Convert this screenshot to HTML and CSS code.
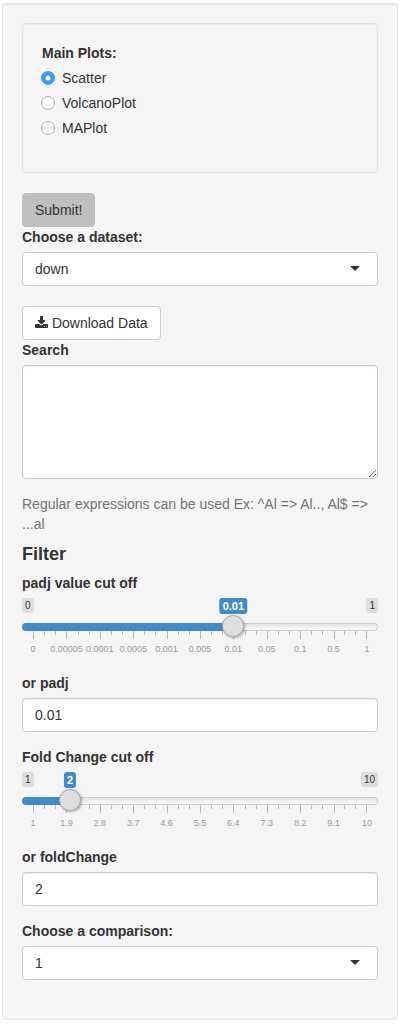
FILE: index.html
```
<!DOCTYPE html>
<html lang="en">
  <head>
    <meta charset="UTF-8" />
    <meta name="viewport" content="width=device-width, initial-scale=1.0" />
    <title>Main Plots</title>
    <link rel="stylesheet" href="styles.css">
  </head>
  <body>
    <form class="well">
      <fieldset class="well plots">
        <legend class="label">Main Plots:</legend>
        <label class="radio"><input type="radio" name="plot" value="scatter" checked /> Scatter</label>
        <label class="radio"><input type="radio" name="plot" value="volcano" /> VolcanoPlot</label>
        <label class="radio"><input type="radio" name="plot" value="ma" /> MAPlot</label>
      </fieldset>

      <button type="button" class="btn btn-submit">Submit!</button>

      <div class="form-group dataset">
        <label class="label" for="dataset">Choose a dataset:</label>
        <select class="control" id="dataset">
          <option>up</option>
          <option selected>down</option>
        </select>
      </div>

      <button type="button" class="btn">
        <svg class="icon" viewBox="0 0 1664 1536" aria-hidden="true">
          <path d="M1280 1216q0-26-19-45t-45-19-45 19-19 45 19 45 45 19 45-19 19-45zm256 0q0-26-19-45t-45-19-45 19-19 45 19 45 45 19 45-19 19-45zm128-224v320q0 40-28 68t-68 28H96q-40 0-68-28t-28-68V992q0-40 28-68t68-28h465l135 136q58 56 136 56t136-56l136-136h464q40 0 68 28t28 68zm-325-569q17 41-14 70l-448 448q-18 19-45 19t-45-19L339 493q-31-29-14-70 17-39 59-39h256V-64q0-26 19-45t45-19h256q26 0 45 19t19 45v448h256q42 0 59 39z" transform="translate(0 128)" />
        </svg>
        Download Data
      </button>

      <div class="form-group">
        <label class="label" for="search">Search</label>
        <textarea class="control" id="search"></textarea>
      </div>

      <p class="help">Regular expressions can be used Ex: ^Al =&gt; Al.., Al$ =&gt; ...al</p>

      <h4>Filter</h4>

      <div class="form-group">
        <label class="label" for="padjSlider">padj value cut off</label>
        <div class="slider" style="--pos: 0.6">
          <div class="tags">
            <span class="tag">0</span>
            <span class="tag">1</span>
            <output class="tag tag-value" for="padjSlider">0.01</output>
          </div>
          <input type="range" id="padjSlider" min="0" max="10" value="6" />
          <ul class="ticks">
            <li></li><li></li><li></li><li></li><li></li><li></li><li></li><li></li><li></li><li></li>
          </ul>
          <ul class="scale">
            <li>0</li>
            <li>0.00005</li>
            <li>0.0001</li>
            <li>0.0005</li>
            <li>0.001</li>
            <li>0.005</li>
            <li>0.01</li>
            <li>0.05</li>
            <li>0.1</li>
            <li>0.5</li>
            <li>1</li>
          </ul>
        </div>
      </div>

      <div class="form-group">
        <label class="label" for="padj">or padj</label>
        <input class="control" type="text" id="padj" value="0.01" />
      </div>

      <div class="form-group">
        <label class="label" for="foldSlider">Fold Change cut off</label>
        <div class="slider" style="--pos: 0.1111">
          <div class="tags">
            <span class="tag">1</span>
            <span class="tag">10</span>
            <output class="tag tag-value" for="foldSlider">2</output>
          </div>
          <input type="range" id="foldSlider" min="1" max="10" value="2" />
          <ul class="ticks">
            <li></li><li></li><li></li><li></li><li></li><li></li><li></li><li></li><li></li><li></li>
          </ul>
          <ul class="scale">
            <li>1</li>
            <li>1.9</li>
            <li>2.8</li>
            <li>3.7</li>
            <li>4.6</li>
            <li>5.5</li>
            <li>6.4</li>
            <li>7.3</li>
            <li>8.2</li>
            <li>9.1</li>
            <li>10</li>
          </ul>
        </div>
      </div>

      <div class="form-group">
        <label class="label" for="foldChange">or foldChange</label>
        <input class="control" type="text" id="foldChange" value="2" />
      </div>

      <div class="form-group comparison">
        <label class="label" for="comparison">Choose a comparison:</label>
        <select class="control" id="comparison">
          <option>1</option>
        </select>
      </div>
    </form>
  </body>
</html>
```
FILE: styles.css
```
* {
  box-sizing: border-box;
}

body {
  font-family: "Helvetica Neue", "Liberation Sans", Arial, sans-serif;
  font-size: 14px;
  line-height: 20px;
  color: #333;
  background-color: #fff;
  margin: 3px 2px;
}

button,
input,
select,
textarea {
  font: inherit;
  color: inherit;
}

ul {
  list-style: none;
  margin: 0;
  padding: 0;
}

.well {
  min-width: 0;
  margin: 0;
  padding: 19px;
  background-color: #f5f5f5;
  border: 1px solid #e3e3e3;
  border-radius: 4px;
  box-shadow: inset 0 1px 1px rgba(0, 0, 0, 0.05);
}

.plots {
  display: flex;
  flex-direction: column;
  gap: 5px;
  margin-bottom: 20px;
  padding-bottom: 34px;
}

.label {
  display: block;
  padding: 0;
  margin-bottom: 5px;
  font-weight: bold;
}

.plots .label {
  float: left;
  margin-bottom: 0;
}

.radio {
  display: flex;
  align-items: center;
  gap: 7px;
  margin-left: -1px;
}

.radio input {
  appearance: none;
  width: 14px;
  height: 14px;
  margin: 0;
  background-color: #fff;
  border: 1px solid #aaa;
  border-radius: 50%;
}

.radio input:checked {
  background: radial-gradient(circle, #fff 2px, #3b99fc 3px);
  border-color: #3b99fc;
}

.btn {
  display: block;
  height: 34px;
  padding: 6px 12px;
  line-height: 20px;
  background-color: #fff;
  border: 1px solid #ccc;
  border-radius: 4px;
  cursor: pointer;
}

.btn-submit {
  background-color: #bfbfbf;
  border-color: #bfbfbf;
}

.icon {
  width: 13px;
  height: 12px;
  fill: #333;
}

.form-group {
  margin-bottom: 15px;
}

.dataset,
.comparison {
  margin-bottom: 20px;
}

.control {
  display: block;
  width: 100%;
  height: 34px;
  padding: 6px 12px;
  background-color: #fff;
  border: 1px solid #ccc;
  border-radius: 4px;
  box-shadow: inset 0 1px 1px rgba(0, 0, 0, 0.075);
}

textarea.control {
  height: 114px;
  resize: both;
}

select.control {
  appearance: none;
  background-image: url("data:image/svg+xml,%3Csvg xmlns='http://www.w3.org/2000/svg' width='10' height='5'%3E%3Cpath d='M0 0h10L5 5z' fill='%23333'/%3E%3C/svg%3E");
  background-repeat: no-repeat;
  background-position: right 17px top 13px;
  box-shadow: none;
}

.help {
  margin: 0 0 10px;
  color: #737373;
}

h4 {
  margin: 0 0 9px;
  font-size: 18px;
  line-height: 20px;
  font-weight: bold;
}

.slider {
  height: 60px;
}

.tags {
  position: relative;
  display: flex;
  justify-content: space-between;
  height: 18px;
}

.tag {
  height: 15px;
  padding: 1px 3px;
  font-size: 10px;
  line-height: 13px;
  background-color: #ddd;
  border-radius: 3px;
}

.tag-value {
  position: absolute;
  left: calc(11px + (100% - 22px) * var(--pos));
  transform: translateX(-50%);
  height: 16px;
  font-size: 11px;
  line-height: 14px;
  font-weight: bold;
  color: #fff;
  background-color: #428bca;
}

.slider input {
  appearance: none;
  position: relative;
  z-index: 1;
  display: block;
  width: 100%;
  height: 22px;
  margin: 0;
  background: none;
}

.slider input::-webkit-slider-runnable-track {
  height: 8px;
  border-radius: 8px;
  background:
    linear-gradient(#428bca, #428bca) 0 0 / calc(11px + (100% - 22px) * var(--pos)) 100% no-repeat,
    linear-gradient(#ccc, #ccc) 0 0 / 100% 1px no-repeat,
    linear-gradient(#ccc, #ccc) 0 100% / 100% 1px no-repeat,
    radial-gradient(circle at 0 50%, transparent 3px, #ccc 3px) 100% 0 / 4px 100% no-repeat,
    linear-gradient(#dedede, #fff);
}

.slider input::-webkit-slider-thumb {
  appearance: none;
  width: 22px;
  height: 22px;
  margin-top: -8px;
  background-color: #dedede;
  border: 1px solid #aaa;
  border-radius: 50%;
  box-shadow: 1px 1px 3px rgba(0, 0, 0, 0.3);
}

.ticks {
  display: grid;
  grid-template-columns: repeat(10, 1fr);
  margin: -7px 11px 0;
}

.ticks li {
  display: flex;
  justify-content: space-evenly;
  height: 8px;
  border-left: 1px solid #99bfdf;
}

.ticks li:last-child {
  border-right: 1px solid #99bfdf;
}

.ticks li::before,
.ticks li::after {
  content: "";
  width: 1px;
  height: 4px;
  background-color: #bbb;
}

.scale {
  display: flex;
  justify-content: space-between;
  margin: 4px 11px 0;
  font-size: 9px;
  line-height: 12px;
  color: #999;
}

.scale li {
  display: flex;
  justify-content: center;
  width: 0;
}
```
